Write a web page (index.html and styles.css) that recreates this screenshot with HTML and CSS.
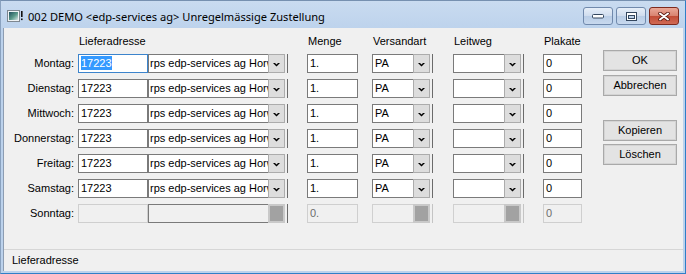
FILE: index.html
```html
<!DOCTYPE html>
<html lang="de">
<head>
    <meta charset="UTF-8">
    <title>Unregelmässige Zustellung</title>
    <link rel="stylesheet" href="styles.css">
</head>
<body>

    <div class="window">
        <div class="titlebar">
            <svg class="app-icon" width="16" height="13" viewBox="0 0 16 13">
                <defs>
                    <linearGradient id="pic" x1="0" y1="0" x2="1" y2="1">
                        <stop offset="0" stop-color="#1f4f5e"/>
                        <stop offset="0.55" stop-color="#5c9a8a"/>
                        <stop offset="1" stop-color="#d7e4e6"/>
                    </linearGradient>
                </defs>
                <rect x="0.5" y="0.5" width="12" height="11" fill="#eef2f4" stroke="#7d8790"/>
                <rect x="2" y="2" width="9" height="8" fill="url(#pic)"/>
                <rect x="14" y="1" width="1.6" height="6" fill="#111"/>
                <rect x="14" y="8.5" width="1.6" height="1.6" fill="#111"/>
            </svg>
            <span class="title">002 DEMO &lt;edp-services ag&gt; Unregelmässige Zustellung</span>
            <div class="caption-buttons">
                <div class="cap-btn">
                    <svg width="12" height="5" viewBox="0 0 12 5"><rect x="0.5" y="0.5" width="11" height="3.5" rx="1" fill="#fff" stroke="#34475f"/></svg>
                </div>
                <div class="cap-btn">
                    <svg width="11" height="9" viewBox="0 0 11 9"><rect x="0.5" y="0.5" width="10" height="8" fill="#fff" stroke="#34475f"/><rect x="2.5" y="3.5" width="6" height="3" fill="#bcd0e8" stroke="#34475f"/></svg>
                </div>
                <div class="cap-btn close">
                    <svg width="12" height="9" viewBox="0 0 12 9"><path d="M2 1.5 L10 7.5 M10 1.5 L2 7.5" stroke="#5a1a12" stroke-width="3.6" stroke-linecap="round"/><path d="M2 1.5 L10 7.5 M10 1.5 L2 7.5" stroke="#fff" stroke-width="2" stroke-linecap="round"/></svg>
                </div>
            </div>
        </div>

        <div class="client">
            <div class="main">
                <div class="form">
                    <div class="row head">
                        <div class="label"></div>
                        <div class="col-nr">Lieferadresse</div>
                        <div class="col-addr"></div>
                        <div class="col-menge">Menge</div>
                        <div class="col-versand">Versandart</div>
                        <div class="col-leitweg">Leitweg</div>
                        <div class="col-plakate">Plakate</div>
                    </div>

                    <div class="row">
                        <div class="label">Montag:</div>
                        <div class="field col-nr focused"><span class="sel">17223</span></div>
                        <div class="combo col-addr"><div class="combo-text">rps edp-services ag Horw</div><div class="combo-btn"><svg width="7" height="4" viewBox="0 0 7 4"><polygon points="0,0 2,0 3.5,1.5 5,0 7,0 3.5,3.5"/></svg></div></div>
                        <div class="field col-menge">1.</div>
                        <div class="combo col-versand"><div class="combo-text">PA</div><div class="combo-btn"><svg width="7" height="4" viewBox="0 0 7 4"><polygon points="0,0 2,0 3.5,1.5 5,0 7,0 3.5,3.5"/></svg></div></div>
                        <div class="combo col-leitweg"><div class="combo-text"></div><div class="combo-btn"><svg width="7" height="4" viewBox="0 0 7 4"><polygon points="0,0 2,0 3.5,1.5 5,0 7,0 3.5,3.5"/></svg></div></div>
                        <div class="field col-plakate">0</div>
                    </div>

                    <div class="row">
                        <div class="label">Dienstag:</div>
                        <div class="field col-nr">17223</div>
                        <div class="combo col-addr"><div class="combo-text">rps edp-services ag Horw</div><div class="combo-btn"><svg width="7" height="4" viewBox="0 0 7 4"><polygon points="0,0 2,0 3.5,1.5 5,0 7,0 3.5,3.5"/></svg></div></div>
                        <div class="field col-menge">1.</div>
                        <div class="combo col-versand"><div class="combo-text">PA</div><div class="combo-btn"><svg width="7" height="4" viewBox="0 0 7 4"><polygon points="0,0 2,0 3.5,1.5 5,0 7,0 3.5,3.5"/></svg></div></div>
                        <div class="combo col-leitweg"><div class="combo-text"></div><div class="combo-btn"><svg width="7" height="4" viewBox="0 0 7 4"><polygon points="0,0 2,0 3.5,1.5 5,0 7,0 3.5,3.5"/></svg></div></div>
                        <div class="field col-plakate">0</div>
                    </div>

                    <div class="row">
                        <div class="label">Mittwoch:</div>
                        <div class="field col-nr">17223</div>
                        <div class="combo col-addr"><div class="combo-text">rps edp-services ag Horw</div><div class="combo-btn"><svg width="7" height="4" viewBox="0 0 7 4"><polygon points="0,0 2,0 3.5,1.5 5,0 7,0 3.5,3.5"/></svg></div></div>
                        <div class="field col-menge">1.</div>
                        <div class="combo col-versand"><div class="combo-text">PA</div><div class="combo-btn"><svg width="7" height="4" viewBox="0 0 7 4"><polygon points="0,0 2,0 3.5,1.5 5,0 7,0 3.5,3.5"/></svg></div></div>
                        <div class="combo col-leitweg"><div class="combo-text"></div><div class="combo-btn"><svg width="7" height="4" viewBox="0 0 7 4"><polygon points="0,0 2,0 3.5,1.5 5,0 7,0 3.5,3.5"/></svg></div></div>
                        <div class="field col-plakate">0</div>
                    </div>

                    <div class="row">
                        <div class="label">Donnerstag:</div>
                        <div class="field col-nr">17223</div>
                        <div class="combo col-addr"><div class="combo-text">rps edp-services ag Horw</div><div class="combo-btn"><svg width="7" height="4" viewBox="0 0 7 4"><polygon points="0,0 2,0 3.5,1.5 5,0 7,0 3.5,3.5"/></svg></div></div>
                        <div class="field col-menge">1.</div>
                        <div class="combo col-versand"><div class="combo-text">PA</div><div class="combo-btn"><svg width="7" height="4" viewBox="0 0 7 4"><polygon points="0,0 2,0 3.5,1.5 5,0 7,0 3.5,3.5"/></svg></div></div>
                        <div class="combo col-leitweg"><div class="combo-text"></div><div class="combo-btn"><svg width="7" height="4" viewBox="0 0 7 4"><polygon points="0,0 2,0 3.5,1.5 5,0 7,0 3.5,3.5"/></svg></div></div>
                        <div class="field col-plakate">0</div>
                    </div>

                    <div class="row">
                        <div class="label">Freitag:</div>
                        <div class="field col-nr">17223</div>
                        <div class="combo col-addr"><div class="combo-text">rps edp-services ag Horw</div><div class="combo-btn"><svg width="7" height="4" viewBox="0 0 7 4"><polygon points="0,0 2,0 3.5,1.5 5,0 7,0 3.5,3.5"/></svg></div></div>
                        <div class="field col-menge">1.</div>
                        <div class="combo col-versand"><div class="combo-text">PA</div><div class="combo-btn"><svg width="7" height="4" viewBox="0 0 7 4"><polygon points="0,0 2,0 3.5,1.5 5,0 7,0 3.5,3.5"/></svg></div></div>
                        <div class="combo col-leitweg"><div class="combo-text"></div><div class="combo-btn"><svg width="7" height="4" viewBox="0 0 7 4"><polygon points="0,0 2,0 3.5,1.5 5,0 7,0 3.5,3.5"/></svg></div></div>
                        <div class="field col-plakate">0</div>
                    </div>

                    <div class="row">
                        <div class="label">Samstag:</div>
                        <div class="field col-nr">17223</div>
                        <div class="combo col-addr"><div class="combo-text">rps edp-services ag Horw</div><div class="combo-btn"><svg width="7" height="4" viewBox="0 0 7 4"><polygon points="0,0 2,0 3.5,1.5 5,0 7,0 3.5,3.5"/></svg></div></div>
                        <div class="field col-menge">1.</div>
                        <div class="combo col-versand"><div class="combo-text">PA</div><div class="combo-btn"><svg width="7" height="4" viewBox="0 0 7 4"><polygon points="0,0 2,0 3.5,1.5 5,0 7,0 3.5,3.5"/></svg></div></div>
                        <div class="combo col-leitweg"><div class="combo-text"></div><div class="combo-btn"><svg width="7" height="4" viewBox="0 0 7 4"><polygon points="0,0 2,0 3.5,1.5 5,0 7,0 3.5,3.5"/></svg></div></div>
                        <div class="field col-plakate">0</div>
                    </div>

                    <div class="row">
                        <div class="label">Sonntag:</div>
                        <div class="field col-nr disabled"></div>
                        <div class="combo col-addr"><div class="combo-text"></div><div class="combo-btn disabled"></div></div>
                        <div class="field col-menge disabled">0.</div>
                        <div class="combo col-versand disabled"><div class="combo-text"></div><div class="combo-btn disabled"></div></div>
                        <div class="combo col-leitweg disabled"><div class="combo-text"></div><div class="combo-btn disabled"></div></div>
                        <div class="field col-plakate disabled">0</div>
                    </div>
                </div>

                <div class="actions">
                    <div class="btn">OK</div>
                    <div class="btn">Abbrechen</div>
                    <div class="btn spaced">Kopieren</div>
                    <div class="btn">Löschen</div>
                </div>
            </div>

            <div class="statusbar">Lieferadresse</div>
        </div>
    </div>

</body>
</html>
```

FILE: styles.css
```css
body {
    margin: 0;
    padding: 0;
    font-family: "Liberation Sans", Arial, sans-serif;
    font-size: 11px;
    color: #000;
    background-color: #bfd4ee;
}

.window {
    width: 686px;
    height: 274px;
    box-sizing: border-box;
    padding: 0 2px 2px 2px;
    background: linear-gradient(#c9dbf0, #bcd2ec 30px, #bcd2ec);
    border-top: 1px solid #7690b0;
    border-left: 1px solid #8aa2bf;
    border-bottom: 1px solid #2f7fc7;
    border-right: 1px solid #2f7fc7;
    display: flex;
    flex-direction: column;
}

/* Titelleiste */
.titlebar {
    height: 27px;
    box-sizing: border-box;
    padding: 3px 4px 0 4px;
    display: flex;
    align-items: center;
    flex-shrink: 0;
}

.app-icon {
    margin-right: 5px;
}

.title {
    font-family: "Noto Sans", "Liberation Sans", sans-serif;
    font-size: 11.1px;
    color: #000;
    margin-top: 1px;
}

.caption-buttons {
    margin-left: auto;
    display: flex;
    gap: 3px;
}

.cap-btn {
    width: 30px;
    height: 18px;
    box-sizing: border-box;
    border: 1px solid #7089ac;
    border-radius: 3px;
    background: linear-gradient(#e6eef8, #cfdcee 50%, #b9cde6 51%, #c8d9ee);
    display: flex;
    align-items: center;
    justify-content: center;
}

.cap-btn.close {
    width: 30px;
    border-color: #7e2a1e;
    background: linear-gradient(#eaa898, #d8826f 50%, #c24c36 51%, #d06a55);
}

/* Arbeitsbereich */
.client {
    flex: 1;
    background-color: #f0f0f0;
    border-left: 1px solid #8d9db2;
    display: flex;
    flex-direction: column;
}

.main {
    height: 221px;
    display: flex;
}

.row {
    display: flex;
    height: 19px;
    margin-bottom: 6px;
}

.row.head {
    height: 20px;
    align-items: flex-end;
}

.row.head div {
    padding-left: 1px;
    line-height: 13px;
    height: 13px;
    box-sizing: border-box;
}

.label {
    width: 74px;
    padding-right: 4px;
    box-sizing: border-box;
    text-align: right;
    line-height: 19px;
}

.col-nr { width: 70px; }
.col-addr { width: 140px; }
.col-menge { width: 51px; margin-left: 19px; }
.col-versand { width: 61px; margin-left: 14px; }
.col-leitweg { width: 71px; margin-left: 20px; }
.col-plakate { width: 39px; margin-left: 19px; }

.field {
    box-sizing: border-box;
    height: 19px;
    border: 1px solid #7a7a7a;
    background-color: #fff;
    padding-left: 2px;
    line-height: 17px;
    white-space: nowrap;
    overflow: hidden;
}

.field.focused {
    border-color: #3c84cc;
}

.sel {
    background-color: #3399ff;
    color: #fff;
    padding: 1px 0;
}

.field.disabled {
    background-color: #f0f0f0;
    border-color: #cfcfcf;
    color: #6d6d6d;
}

.combo {
    box-sizing: border-box;
    height: 19px;
    display: flex;
    border-right: 1px solid #6b6b6b;
}

.combo-text {
    flex: 1;
    box-sizing: border-box;
    border: 1px solid #7a7a7a;
    border-right: none;
    background-color: #fff;
    padding-left: 1px;
    line-height: 17px;
    white-space: nowrap;
    overflow: hidden;
}

.col-versand .combo-text {
    padding-left: 2px;
}

.combo-btn {
    width: 17px;
    height: 19px;
    box-sizing: border-box;
    margin-right: 2px;
    border: 1px solid #acacac;
    background-color: #dddddd;
    display: flex;
    align-items: center;
    justify-content: center;
    padding-top: 2px;
}

.combo-btn svg {
    fill: #000;
}

.combo-btn.disabled {
    border: 2px solid #c9c9c9;
    background-color: #a2a2a2;
}

.col-addr .combo-text:empty {
    background-color: #f0f0f0;
}

.combo.disabled {
    border-right-color: #c4c4c4;
}

.combo.disabled .combo-text {
    background-color: #f0f0f0;
    border-color: #d0d0d0;
}

/* Schaltflächen rechts */
.actions {
    margin-left: 21px;
    padding-top: 22px;
    display: flex;
    flex-direction: column;
}

.btn {
    width: 74px;
    height: 21px;
    box-sizing: border-box;
    margin-bottom: 4px;
    border: 1px solid #a9a9a9;
    box-shadow: inset 0 0 0 1px #d4d4d4;
    background-color: #e3e3e3;
    text-align: center;
    line-height: 19px;
}

.btn.spaced {
    margin-top: 20px;
    margin-bottom: 3px;
}

/* Statuszeile */
.statusbar {
    flex: 1;
    border-top: 1px solid #d6d6d6;
    padding-left: 8px;
    line-height: 20px;
}
```
